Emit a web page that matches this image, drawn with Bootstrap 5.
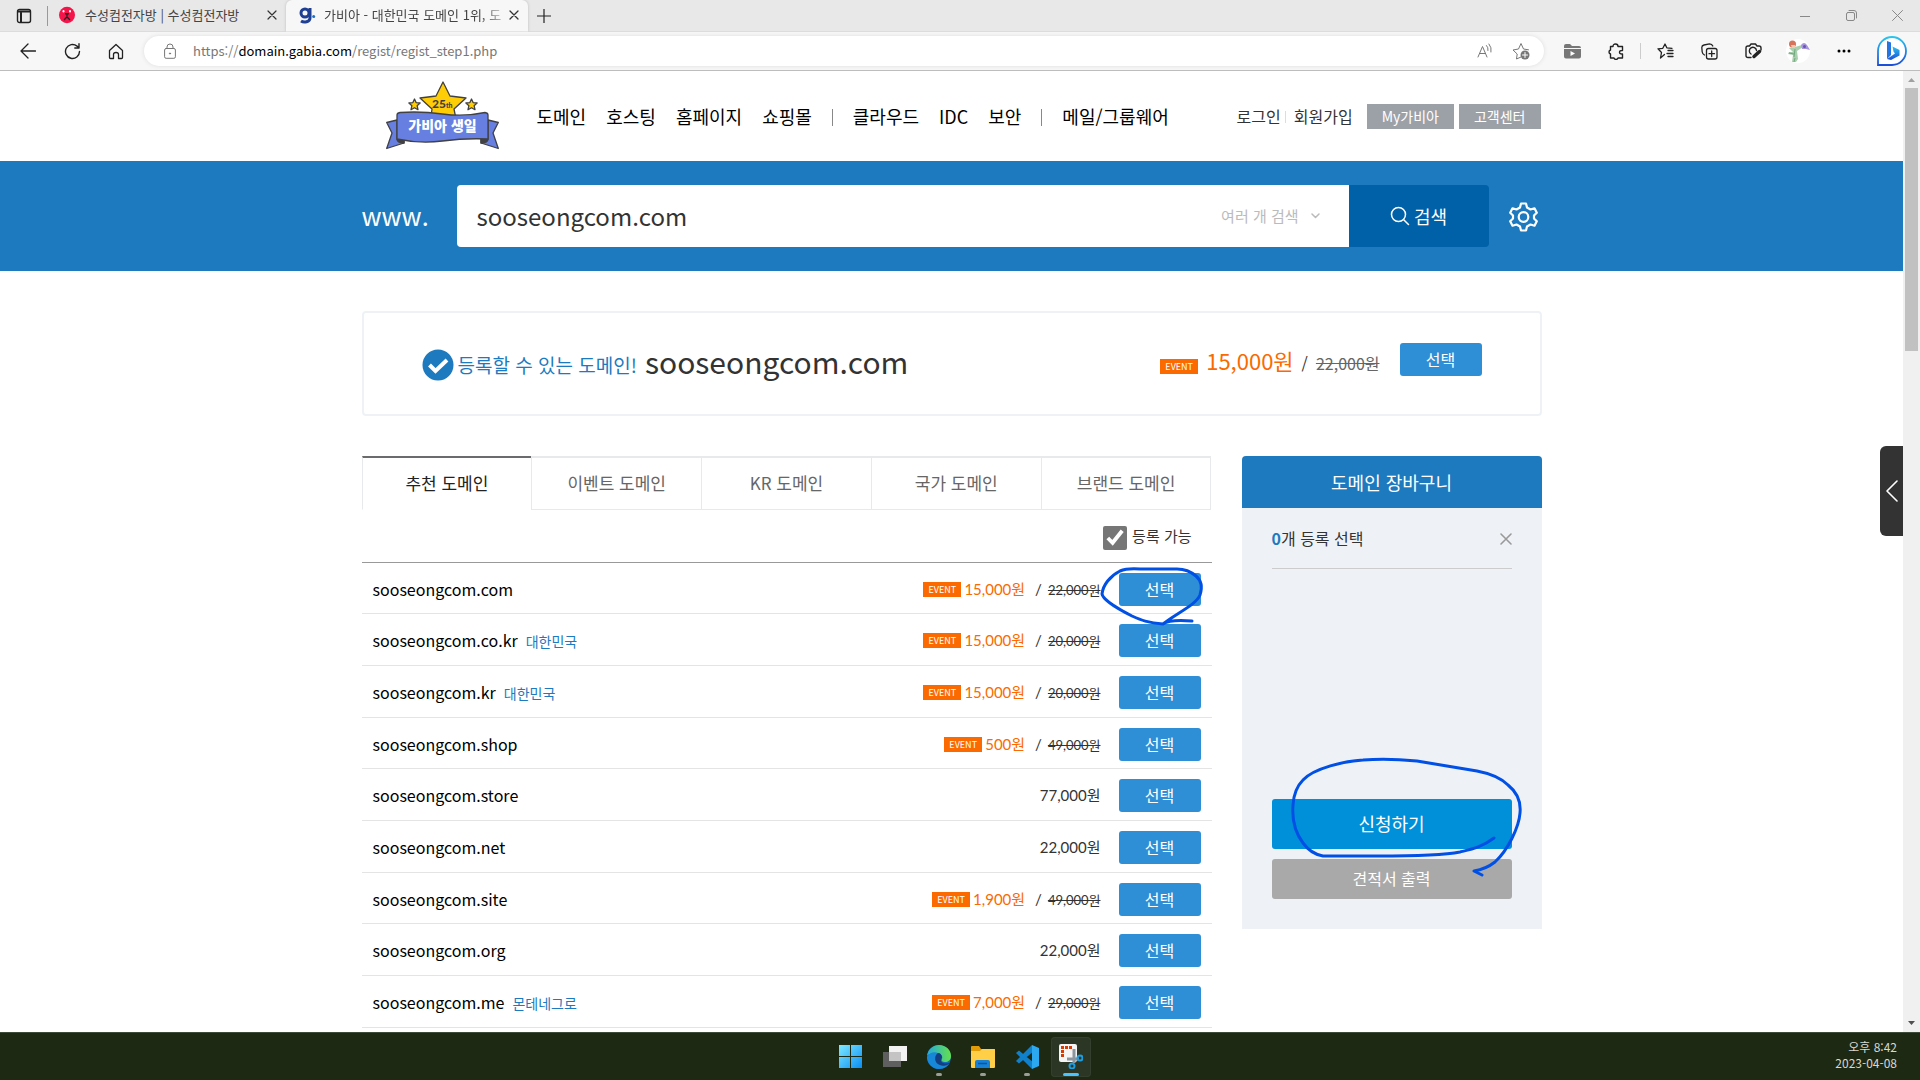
<!DOCTYPE html>
<html lang="ko">
<head>
<meta charset="utf-8">
<meta name="viewport" content="width=device-width, initial-scale=1">
<title>가비아 - 대한민국 도메인 1위</title>
<link href="https://cdn.jsdelivr.net/npm/bootstrap@5.3.0/dist/css/bootstrap.min.css" rel="stylesheet">
<style>
body{font-family:"Noto Sans CJK KR",sans-serif;font-size:16px;line-height:24px;color:#333;height:100vh}
a{color:inherit;text-decoration:none}
button{font-family:inherit}
svg{display:block;flex:none}
.ic{fill:none;stroke:currentColor;stroke-linecap:round;stroke-linejoin:round}
.icon-btn{width:44px;height:30px;padding:0;border:0;background:none;color:#222;display:flex;align-items:center;justify-content:center;flex:none}
/* browser chrome */
.tab-strip{height:32px;background:#e8e8e8;font-size:13px;line-height:20px;border-bottom:1px solid #dcdcdc}
.tab-strip .btab{color:#444;gap:10px;height:32px;padding:0 9px 2px 11px}
.btab.one{width:238px}
.tab-strip .btab.two{width:242px;gap:8px;padding:0 12px 2px 13px;background:#f7f7f7;border-radius:6px 6px 0 0;box-shadow:0 0 3px #bbb;clip-path:inset(0 -3px 0 -3px)}
.btab .ttl{flex:1;white-space:nowrap}
.btab.two .ttl{-webkit-mask-image:linear-gradient(90deg,#000 88%,#0006)}
.btab button,.plain{border:0;background:none;padding:0;color:#333}
.win-btn{width:46px;color:#888}
.toolbar{height:39px;background:#f7f7f7;border-bottom:1px solid #bdbdbd;padding:0 3px 0 6px}
.pill{height:30px;border-radius:15px;background:#fff;box-shadow:0 0 4px #ddd;margin-right:6px;padding:0 5px 0 20px;color:#777}
.pill .url{font-size:13px;line-height:20px;margin-left:17px}
.pill .icon-btn{width:36px;color:#777}
.v-sep{width:1px;height:16px;background:#ccc;margin:0 2px}
/* page */
.shell{width:1180px}
.site-head{height:90px;padding-left:24px}
.main-nav{font-size:18px;color:#000;gap:20px;margin-left:38px}
.bar-sep{width:1px;height:17px;background:#888;margin-top:2px}
.grey-btn{background:#9ca1a8;color:#fff;font-size:14px;line-height:25px;padding:0 15px}
.search-band{background:#1e7abe;height:110px;color:#fff}
.www{font-size:25px;width:95px;padding-bottom:2px}
.search-box{height:62px;background:#fff;border-radius:4px 0 0 4px;color:#bbb;padding:0 29px 0 20px}
.search-box input{border:0;outline:0;background:none;font-size:24px;color:#333;padding:0 0 2px}
.multi{font-size:15px;color:#bbb;gap:12px}
.search-go{width:140px;height:62px;background:#0060a8;border:0;color:#fff;font-size:18px;border-radius:0 4px 4px 0;gap:4px}
.results{padding-top:40px}
.result{height:105px;border:2px solid #eef2f7;border-radius:4px;padding:0 58px}
.free{margin-top:3px}
.free-txt{font-size:19px;color:#1e7abe}
.big-name{font-size:30px;line-height:40px;padding-bottom:6px}
.offer{padding-bottom:4px}
.ev{display:inline-block;background:#fa6a00;color:#fff;font-size:9px;line-height:15px;width:38px;text-align:center}
.pick{background:#2f8fd6;border:0;color:#fff;border-radius:3px;width:82px;height:33px;font-size:16px;line-height:31px;padding:0;display:block}
.orange{color:#fa6a00}
.columns{gap:30px;margin-top:40px}
.dom-tabs{height:54px;font-size:17px;color:#666}
.dom-tabs a{flex:1;display:flex;align-items:center;justify-content:center;border:solid #e8e9ea;border-width:2px 0 1px 1px;padding-bottom:1px}
.dom-tabs a:last-child{border-right-width:1px}
.dom-tabs a.on{border-color:#6b6b6e #e8e9ea #fff;color:#222}
.filter{height:53px;font-size:15px;border-bottom:1px solid #999;padding:0 20px 0 0;gap:5px}
.filter input{width:24px;height:24px;accent-color:#767676;margin:3px 0 0}
.doms{width:100%;border-collapse:separate;border-spacing:0}
.doms tr{height:52px}
.doms tr:nth-child(3n+1){height:51px}
.doms td{vertical-align:top;padding:14px 0 0;line-height:24px;border-bottom:1px solid #e4e4e4}
.doms td:first-child{padding-left:11px;color:#000}
.doms td:nth-child(2){text-align:right;padding-right:18px;font-family:Lato,"Noto Sans CJK KR",sans-serif;font-size:15px}
.doms td:last-child{padding-top:10px;width:93px}
.doms .ev{font-family:"Noto Sans CJK KR",sans-serif;margin-right:3px;vertical-align:2px}
.doms i{font-style:normal;margin:0 6px 0 10px}
.doms s{font-size:13px}
.nation{color:#1e7abe;font-size:14px;margin-left:8px}
.cart{width:300px;height:473px;background:#eef2f7;border-radius:4px 4px 0 0}
.cart-head{background:#1e7abe;color:#fff;font-size:18px;line-height:52px;border-radius:4px 4px 0 0}
.cart-body{padding:18px 30px 30px}
.cart-sum{border-bottom:1px solid #ccc;height:43px}
.apply{background:#0090da;color:#fff;border:0;border-radius:3px;height:50px;font-size:18px;padding-bottom:3px}
.quote{background:#a9a9a9;color:#fff;border:0;border-radius:3px;height:40px;font-size:16px;margin-top:10px;padding-bottom:3px}
.ink{position:absolute;left:0;top:0;pointer-events:none;z-index:3}
.drawer{position:absolute;right:0;top:375px;width:23px;height:90px;border:0;border-radius:6px 0 0 6px;background:#333;color:#fff;padding:0;z-index:4}
.sbar{width:17px;background:#f0f0f0;padding:0 2px}
.thumb{height:263px;background:#c1c1c1}
/* taskbar */
.taskbar{height:48px;background:#1e2914;border-top:1px solid #3c4a38;color:#d5d8d2}
.task{width:44px;height:40px;border:0;background:none;padding:0;position:relative;display:flex;align-items:center;justify-content:center}
.task.run::after{content:"";position:absolute;bottom:1px;width:6px;height:3px;border-radius:2px;background:#9a9e96}
.task.now{width:40px;margin:0 1px 0 2px;background:#2b3624;border-radius:4px;box-shadow:0 0 0 1px #343f2d inset}
.task.now::after{width:16px;background:#4cc2ff}
.clock{position:absolute;right:23px;top:6px;font-size:12px;line-height:16px;text-align:right}
</style>
<script src="https://cdn.jsdelivr.net/npm/bootstrap@5.3.0/dist/js/bootstrap.bundle.min.js"></script>
</head>
<body class="d-flex flex-column overflow-hidden bg-white">

<div class="tab-strip d-flex align-items-center flex-shrink-0">
  <button class="icon-btn" style="width:47px" aria-label="탭 메뉴"><svg class="ic" width="16" height="16" viewBox="0 0 16 16" stroke-width="1.4"><rect x="1.500" y="1.500" width="13" height="13" rx="2"/><path d="M2 3.500h12M5 5v9" stroke-width="2"/></svg></button>
  <span style="width:1px;height:20px;background:#999"></span>
  <div class="btab one d-flex align-items-center">
    <svg width="16" height="20" viewBox="0 0 16 16" preserveAspectRatio="none"><ellipse cx="8" cy="8" rx="8" ry="6.600" fill="#f5144a"/><circle cx="4.500" cy="5" r="1" fill="#fff"/><circle cx="11" cy="5" r="1" fill="#fff"/><path d="M8 6.500v3L5 12M8 9.500l3 2.500M6 7h4" stroke="#222" stroke-width="1.300" fill="none"/></svg>
    <span class="ttl">수성컴전자방 | 수성컴전자방</span>
    <button aria-label="닫기"><svg class="ic" width="10" height="10" viewBox="0 0 10 10" stroke-width="1.200"><path d="M1 1l8 8M9 1L1 9"/></svg></button>
  </div>
  <div class="btab two d-flex align-items-center">
    <svg width="17" height="20" viewBox="0 0 17 20" fill="none"><circle cx="6" cy="8" r="4" stroke="#1f3f93" stroke-width="3"/><path d="M11 3v10c0 4-6 5-9 3" stroke="#1f3f93" stroke-width="3"/><circle cx="14.700" cy="11.500" r="1.500" fill="#1f6fc3"/></svg>
    <span class="ttl">가비아 - 대한민국 도메인 1위, 도</span>
    <button aria-label="닫기"><svg class="ic" width="10" height="10" viewBox="0 0 10 10" stroke-width="1.300"><path d="M1 1l8 8M9 1L1 9"/></svg></button>
  </div>
  <button class="icon-btn" style="width:32px" aria-label="새 탭"><svg class="ic" width="14" height="14" viewBox="0 0 14 14" stroke-width="1.200"><path d="M7 0v14M0 7h14"/></svg></button>
  <div class="d-flex ms-auto">
    <button class="icon-btn win-btn" aria-label="최소화"><svg class="ic" width="10" height="10" viewBox="0 0 10 10"><path d="M0 5.500h10"/></svg></button>
    <button class="icon-btn win-btn" aria-label="복원"><svg class="ic" width="11" height="11" viewBox="0 0 11 11"><rect x=".5" y="2.500" width="8" height="8" rx="1.500"/><path d="M3 .5h5q2.500 0 2.500 2.500v5"/></svg></button>
    <button class="icon-btn win-btn" aria-label="창 닫기"><svg class="ic" width="11" height="11" viewBox="0 0 11 11"><path d="M.5.5l10 10M10.500.5l-10 10"/></svg></button>
  </div>
</div>

<div class="toolbar d-flex align-items-center flex-shrink-0">
  <button class="icon-btn" aria-label="뒤로"><svg class="ic" width="16" height="16" viewBox="0 0 16 16" stroke-width="1.300"><path d="M15.500 8H1M8 1L1 8l7 7"/></svg></button>
  <button class="icon-btn" aria-label="새로 고침"><svg class="ic" width="17" height="17" viewBox="0 0 17 17" stroke-width="1.400"><path d="M15.500 8.500a7 7 0 1 1-2.500-5.400L15 5M15 .8V5h-4.200"/></svg></button>
  <button class="icon-btn" aria-label="홈"><svg class="ic" width="16" height="17" viewBox="0 0 16 17" stroke-width="1.300"><path d="M1.500 7.500L8 1.500l6.500 6v7q0 1-1 1h-3v-4q0-2-2.500-2t-2.500 2v4h-3q-1 0-1-1z"/></svg></button>
  <div class="pill d-flex align-items-center flex-grow-1" style="margin-left:6px">
    <svg class="ic" width="12" height="16" viewBox="0 0 12 16"><rect x=".6" y="5.500" width="10.800" height="9.800" rx="1.500"/><path d="M3 5.500V4a3 3 0 0 1 6 0v1.500"/><circle cx="6" cy="10.500" r=".6" fill="currentColor"/></svg>
    <a class="url" href="#">https://<span class="text-black">domain.gabia.com</span>/regist/regist_step1.php</a>
    <button class="icon-btn ms-auto" aria-label="소리내어 읽기"><svg class="ic" width="16" height="16" viewBox="0 0 16 16"><path d="M1 14L5.500 3.500 10 14M2.500 10.500h6M9.500 2.500q2 2 1.500 5M12 1q3 3.500 2 8"/></svg></button>
    <button class="icon-btn" aria-label="즐겨찾기 추가"><svg class="ic" width="18" height="18" viewBox="0 0 18 18"><path d="M9 15l-4.500 2 .7-5L1 8l5.500-1L9 1.500 11.500 7l5 .8"/><circle cx="13" cy="13" r="4.500" fill="currentColor" stroke="none"/><path d="M13 10.500v5M10.500 13h5" stroke="#fff"/></svg></button>
  </div>
  <button class="icon-btn" style="color:#777" aria-label="미디어"><svg width="17" height="15" viewBox="0 0 17 15" fill="currentColor"><path d="M0 2q0-2 2-2h4l2 2h7q2 0 2 2H0zM0 5h17v7.500q0 2-2 2H2q-2 0-2-2z"/><path d="M6.500 7v5l4.500-2.500z" fill="#fff"/></svg></button>
  <button class="icon-btn" aria-label="확장"><svg class="ic" width="17" height="17" viewBox="0 0 17 17" stroke-width="1.400"><path d="M5 3.500q0-2.500 2.500-2.500T10 3.500h4.500v4q-3-.2-3 1.800t3 1.700v4H10Q9.500 16.500 8 16.500T6 15H2.500v-4Q1 10.500 1 9t1.500-2V3.500z"/></svg></button>
  <span class="v-sep"></span>
  <button class="icon-btn" aria-label="즐겨찾기"><svg class="ic" width="17" height="16" viewBox="0 0 17 16" stroke-width="1.300"><path d="M7.500 11.500L3.500 15l1-5.500L1 5.800l4.800-.5L8 1l1.800 3.800 5.200.5M11 7.500h5M10 10.500h6M11 13.500h5"/></svg></button>
  <button class="icon-btn" aria-label="컬렉션"><svg class="ic" width="17" height="17" viewBox="0 0 17 17" stroke-width="1.300"><rect x="5.500" y="5.500" width="10.500" height="10.500" rx="2"/><path d="M10.700 8v5.500M8 10.700h5.500M3.500 12Q1.500 11 1.200 9L.8 4.500Q.8 2.500 3 2l5.500-1.200Q11 .8 11.800 3"/></svg></button>
  <button class="icon-btn" aria-label="웹 캡처"><svg class="ic" width="17" height="16" viewBox="0 0 17 16" stroke-width="1.400"><path d="M6 14.500H3q-2 0-2-2V5q0-2 2-2h1.500L6 1h4.500L12 3h2q2 0 2 2v2"/><path d="M6 11a3.600 3.600 0 1 1 5.500-3.500"/><path d="M9 13.500l5.500-5" stroke-width="3.500"/></svg></button>
  <button class="icon-btn" aria-label="프로필" style="width:46px"><svg width="24" height="24" viewBox="0 0 24 24"><circle cx="12" cy="12" r="12" fill="#fff"/><path d="M3 9l6-1 7-2 1 2-6 4 1 8-2 3H6l1-7-5-1 1-2 4 0z" fill="#a9cfae"/><path d="M3 14l5 1M9 10l-1 8M9 19l-1 4" stroke="#6fa97c"/><circle cx="6.500" cy="5" r="3.500" fill="#d7735a"/><path d="M5 6h4v3H6z" fill="#f2c7ac"/><path d="M15 6q3-4 6 0l3 5-4-1-4 0z" fill="#a796dd"/><circle cx="18.500" cy="7.500" r="1.500" fill="#6954ae"/></svg></button>
  <button class="icon-btn" aria-label="설정" style="width:46px"><svg width="14" height="4" viewBox="0 0 14 4"><circle cx="2" cy="2" r="1.500"/><circle cx="7" cy="2" r="1.500"/><circle cx="12" cy="2" r="1.500"/></svg></button>
  <button class="icon-btn" style="width:50px" aria-label="Bing"><svg width="32" height="32" viewBox="0 0 32 32"><defs><linearGradient id="bg1" x2="0" y2="1"><stop stop-color="#2bc4ee"/><stop offset="1" stop-color="#1c4fd8"/></linearGradient></defs><path d="M2 30V16a14 14 0 1 1 14 14z" fill="#fff" stroke="url(#bg1)" stroke-width="1.800"/><path d="M11 6l4 1.500V20l-4 4z" fill="#2474e4"/><path d="M16.500 11.500l7 3.500v5.500L15 25l-4-1 8-5.500-1.500-2z" fill="url(#bg1)"/></svg></button>
</div>

<div class="d-flex flex-grow-1 overflow-hidden" style="min-height:0">
<main class="flex-grow-1 position-relative overflow-hidden">
  <header class="shell site-head mx-auto d-flex align-items-center">
    <a href="#" aria-label="가비아 생일"><svg width="113" height="70" viewBox="0 0 113 70"><g stroke="#414042" stroke-width="1.300" stroke-linejoin="round"><path d="M57 1l7 14 16 2-12 11 3 15H44l2-15L34 17l16-2z" fill="#ffcd05"/><path d="M28.500 18l1.600 3.600 4 .4-3 2.700.9 4-3.500-2-3.500 2 .9-4-3-2.700 4-.4zM85.500 18l1.600 3.600 4 .4-3 2.700.9 4-3.500-2-3.500 2 .9-4-3-2.700 4-.4z" fill="#ffcd05"/><path d="M11 39L.700 41.500 6 52 .700 67.500 18 62V58h-7zM102 39l10.300 2.500L107 52l5.300 15.500L95 62V58h7z" fill="#667fe0"/><path d="M11 58q0 4 7 4v-5M102 58q0 4-7 4v-5" fill="#414042"/><path d="M11 34q0-2 3-2.500Q35 30 56.500 33T99 31.500q3 .5 3 2.500v24q-23-1-45.500 2T11 58z" fill="#667fe0"/></g><text x="46" y="27" font-size="12" font-weight="900" fill="#414042" font-family="Lato,sans-serif">25<tspan font-size="7">th</tspan></text><text x="56.500" y="50" text-anchor="middle" font-size="14" font-weight="900" fill="#fff" font-family="Noto Sans CJK KR,sans-serif">가비아 생일</text></svg></a>
    <nav class="main-nav d-flex align-items-center">
      <a href="#">도메인</a><a href="#">호스팅</a><a href="#">홈페이지</a><a href="#">쇼핑몰</a><span class="bar-sep"></span><a href="#">클라우드</a><a href="#">IDC</a><a href="#">보안</a><span class="bar-sep"></span><a href="#">메일/그룹웨어</a>
    </nav>
    <div class="ms-auto d-flex align-items-center" style="margin-right:1px">
      <a href="#">로그인</a><span class="bar-sep mx-1" style="height:12px;background:#ddd"></span><a href="#" class="ps-1">회원가입</a>
      <a href="#" class="grey-btn" style="margin:0 5px 0 14px">My가비아</a><a href="#" class="grey-btn">고객센터</a>
    </div>
  </header>

  <section class="search-band">
    <form class="shell mx-auto d-flex align-items-center h-100" onsubmit="return false">
      <label class="www" for="q">www.</label>
      <div class="search-box d-flex align-items-center flex-grow-1">
        <input id="q" class="flex-grow-1" type="text" value="sooseongcom.com">
        <button type="button" class="plain multi d-flex align-items-center">여러 개 검색 <svg class="ic" width="9" height="6" viewBox="0 0 9 6" stroke-width="1.500"><path d="M1 1l3.500 3.500L8 1"/></svg></button>
      </div>
      <button class="search-go d-flex align-items-center justify-content-center"><svg class="ic" width="20" height="20" viewBox="0 0 20 20" stroke-width="1.500"><circle cx="8.500" cy="8.500" r="7"/><path d="M13.500 13.500l5 5"/></svg>검색</button>
      <button type="button" class="plain text-white" style="margin:2px 4px 0 20px" aria-label="설정"><svg class="ic" width="29" height="30" viewBox="0 0 29 30" stroke-width="2.200"><path d="M12 1.500h5l1 4 3.500 2 4-1.200 2.300 4.400-2.800 2.800v3l2.800 2.800-2.300 4.400-4-1.200-3.500 2-1 4h-5l-1-4-3.500-2-4 1.200-2.300-4.400L4 16.500v-3L1.200 10.700l2.300-4.400 4 1.200 3.500-2z"/><circle cx="14.500" cy="15" r="4.800"/></svg></button>
    </form>
  </section>

  <div class="shell results mx-auto position-relative">
    <section class="result d-flex align-items-center">
      <div class="free d-flex align-items-center">
        <svg width="32" height="32" viewBox="0 0 32 32"><circle cx="16" cy="16" r="15.500" fill="#1e7abe"/><path d="M7.500 16l6 6L25 11" fill="none" stroke="#fff" stroke-width="4"/></svg>
        <span class="free-txt ps-1">등록할 수 있는 도메인!</span>
      </div>
      <strong class="big-name fw-normal ms-2">sooseongcom.com</strong>
      <div class="offer ms-auto d-flex align-items-baseline">
        <span class="ev me-2">EVENT</span><span class="orange" style="font-size:22px">15,000원</span><span class="mx-2">/</span><s style="color:#666">22,000원</s>
      </div>
      <button class="pick mb-2" style="margin-left:20px">선택</button>
    </section>

    <div class="columns d-flex">
      <section class="flex-grow-1">
        <nav class="dom-tabs d-flex"><a class="on" href="#">추천 도메인</a><a href="#">이벤트 도메인</a><a href="#">KR 도메인</a><a href="#">국가 도메인</a><a href="#">브랜드 도메인</a></nav>
        <div class="filter d-flex align-items-center justify-content-end"><input type="checkbox" id="avail" checked><label for="avail">등록 가능</label></div>
        <table class="doms">
          <tbody>
          <tr><td>sooseongcom.com</td><td><span class="ev">EVENT</span><span class="orange">15,000원</span><i>/</i><s>22,000원</s></td><td><button class="pick">선택</button></td></tr>
          <tr><td>sooseongcom.co.kr<span class="nation">대한민국</span></td><td><span class="ev">EVENT</span><span class="orange">15,000원</span><i>/</i><s>20,000원</s></td><td><button class="pick">선택</button></td></tr>
          <tr><td>sooseongcom.kr<span class="nation">대한민국</span></td><td><span class="ev">EVENT</span><span class="orange">15,000원</span><i>/</i><s>20,000원</s></td><td><button class="pick">선택</button></td></tr>
          <tr><td>sooseongcom.shop</td><td><span class="ev">EVENT</span><span class="orange">500원</span><i>/</i><s>49,000원</s></td><td><button class="pick">선택</button></td></tr>
          <tr><td>sooseongcom.store</td><td>77,000원</td><td><button class="pick">선택</button></td></tr>
          <tr><td>sooseongcom.net</td><td>22,000원</td><td><button class="pick">선택</button></td></tr>
          <tr><td>sooseongcom.site</td><td><span class="ev">EVENT</span><span class="orange">1,900원</span><i>/</i><s>49,000원</s></td><td><button class="pick">선택</button></td></tr>
          <tr><td>sooseongcom.org</td><td>22,000원</td><td><button class="pick">선택</button></td></tr>
          <tr><td>sooseongcom.me<span class="nation">몬테네그로</span></td><td><span class="ev">EVENT</span><span class="orange">7,000원</span><i>/</i><s>29,000원</s></td><td><button class="pick">선택</button></td></tr>
          </tbody>
        </table>
      </section>
      <aside class="cart d-flex flex-column flex-shrink-0">
        <h2 class="cart-head m-0 text-center fw-normal">도메인 장바구니</h2>
        <div class="cart-body d-flex flex-column flex-grow-1">
          <div class="cart-sum d-flex justify-content-between"><span><b style="color:#1e7abe">0</b>개 등록 선택</span><button class="plain pb-3" style="color:#999" aria-label="비우기"><svg class="ic" width="12" height="12" viewBox="0 0 12 12" stroke-width="1.600"><path d="M1 1l10 10M11 1L1 11"/></svg></button></div>
          <button class="apply mt-auto">신청하기</button>
          <button class="quote">견적서 출력</button>
        </div>
      </aside>
    </div>

    <!-- hand-drawn pen marks -->
    <svg class="ink" width="1180" height="660" viewBox="362 271 1180 660" fill="none" stroke="#0050e6" stroke-width="3" stroke-linecap="round" stroke-linejoin="round"><path d="M1163 624C1148 623 1141 620 1132 616C1120 610 1103 600 1102 594C1103 585 1110 576 1120 571Q1127 568 1140 569L1177 569Q1188 569 1196 576C1203 582 1202 589 1200 595C1196 605 1175 614 1163 624Q1170 619 1192 621"/><path d="M1494 838C1482 847 1472 849 1460 852C1440 856 1400 856 1377 856L1323 856Q1311 854 1303 843C1294 831 1292 817 1293 805Q1294 789 1303 780C1314 768 1345 761 1363 760Q1387 758 1417 761Q1447 766 1477 771Q1498 775 1508 785C1518 793 1521 803 1520 813C1519 827 1508 850 1495 862Q1486 869 1474 871L1482 875"/></svg>
  </div>
  <button class="drawer d-flex align-items-center justify-content-center" aria-label="열기"><svg class="ic" width="12" height="22" viewBox="0 0 12 22" stroke-width="1.600"><path d="M11 1L1 11l10 10"/></svg></button>
</main>
<div class="sbar d-flex flex-column flex-shrink-0">
  <svg width="13" height="17" viewBox="0 0 13 17"><path d="M3 11h7L6.500 7z" fill="#a0a0a0"/></svg>
  <div class="thumb"></div>
  <svg class="mt-auto" width="13" height="17" viewBox="0 0 13 17"><path d="M3 6h7l-3.500 4z" fill="#505050"/></svg>
</div>
</div>

<footer class="taskbar position-relative d-flex align-items-center justify-content-center flex-shrink-0">
  <button class="task" aria-label="시작"><svg width="23" height="23" viewBox="0 0 23 23"><defs><linearGradient id="w" x2="1" y2="1"><stop stop-color="#7eeaff"/><stop offset="1" stop-color="#0a8df5"/></linearGradient></defs><path d="M0 0h11v11H0zM12 0h11v11H12zM0 12h11v11H0zM12 12h11v11H12z" fill="url(#w)"/></svg></button>
  <button class="task" aria-label="작업 보기"><svg width="24" height="23" viewBox="0 0 24 23"><path d="M0 7h18v15H0z" fill="#5f5f5f"/><path d="M6 1h18v15H6z" fill="#f2f2f2"/><path d="M6 7h12v9H6z" fill="#c4c4c4"/></svg></button>
  <button class="task run" aria-label="Edge"><svg width="24" height="24" viewBox="0 0 24 24"><defs><linearGradient id="e" x2="1"><stop stop-color="#23a9dd"/><stop offset="1" stop-color="#65e04b"/></linearGradient></defs><circle cx="12" cy="12" r="12" fill="#1468bd"/><path d="M0 11C1 4 6 0 12 0c7 0 12 5 12 11 0 4-3 6-6 6-3 0-4-1-3-3 1-3-1-6-5-6C5 8 1 9 0 11z" fill="url(#e)"/><path d="M11 8C7 11 7 18 13 20q5 2 10-3-3 7-11 7C5 24 0 18 0 12 2 8 7 6 11 8z" fill="#1787d8"/><path d="M11 8c-4 3-4 10 2 12q5 2 9-1l1-1.500c-8 3-11-2-8-5C15 10 13 8 11 8z" fill="#123e82"/></svg></button>
  <button class="task run" aria-label="파일 탐색기"><svg width="24" height="22" viewBox="0 0 24 22"><path d="M0 1q0-1 1-1h7l2 3h14v5H0z" fill="#e19c07"/><path d="M0 5h9l2-2h12q1 0 1 1v17q0 1-1 1H1q-1 0-1-1z" fill="#ffcf48"/><path d="M4 22v-6q0-2 2-2h11q2 0 2 2v6z" fill="#1681d6"/><path d="M7 17.500h9" stroke="#0b559d" stroke-width="1.500"/></svg></button>
  <button class="task run" aria-label="VS Code"><svg width="24" height="24" viewBox="0 0 24 24"><path d="M1 16l16-16 2 6L4 18.500zM1 8l3-2.500L19 18l-2 6z" fill="#1180cb"/><path d="M17 0l7 3v18l-7 3z" fill="#2ba8ef"/></svg></button>
  <button class="task run now" aria-label="캡처 도구"><svg width="25" height="25" viewBox="0 0 25 25"><rect x="1" width="18" height="18" rx="2" fill="#f5f5f5"/><path d="M4.500 13V3.500H14" fill="none" stroke="#d83b01" stroke-width="3" stroke-dasharray="3 1"/><path d="M16 5v14M9 15h12" stroke="#8d969d" stroke-width="3"/><circle cx="22" cy="14" r="2.500" fill="none" stroke="#1b9de2" stroke-width="2"/><circle cx="14" cy="22" r="2.500" fill="none" stroke="#1b9de2" stroke-width="2"/></svg></button>
  <div class="clock">오후 8:42<br>2023-04-08</div>
</footer>
</body>
</html>
